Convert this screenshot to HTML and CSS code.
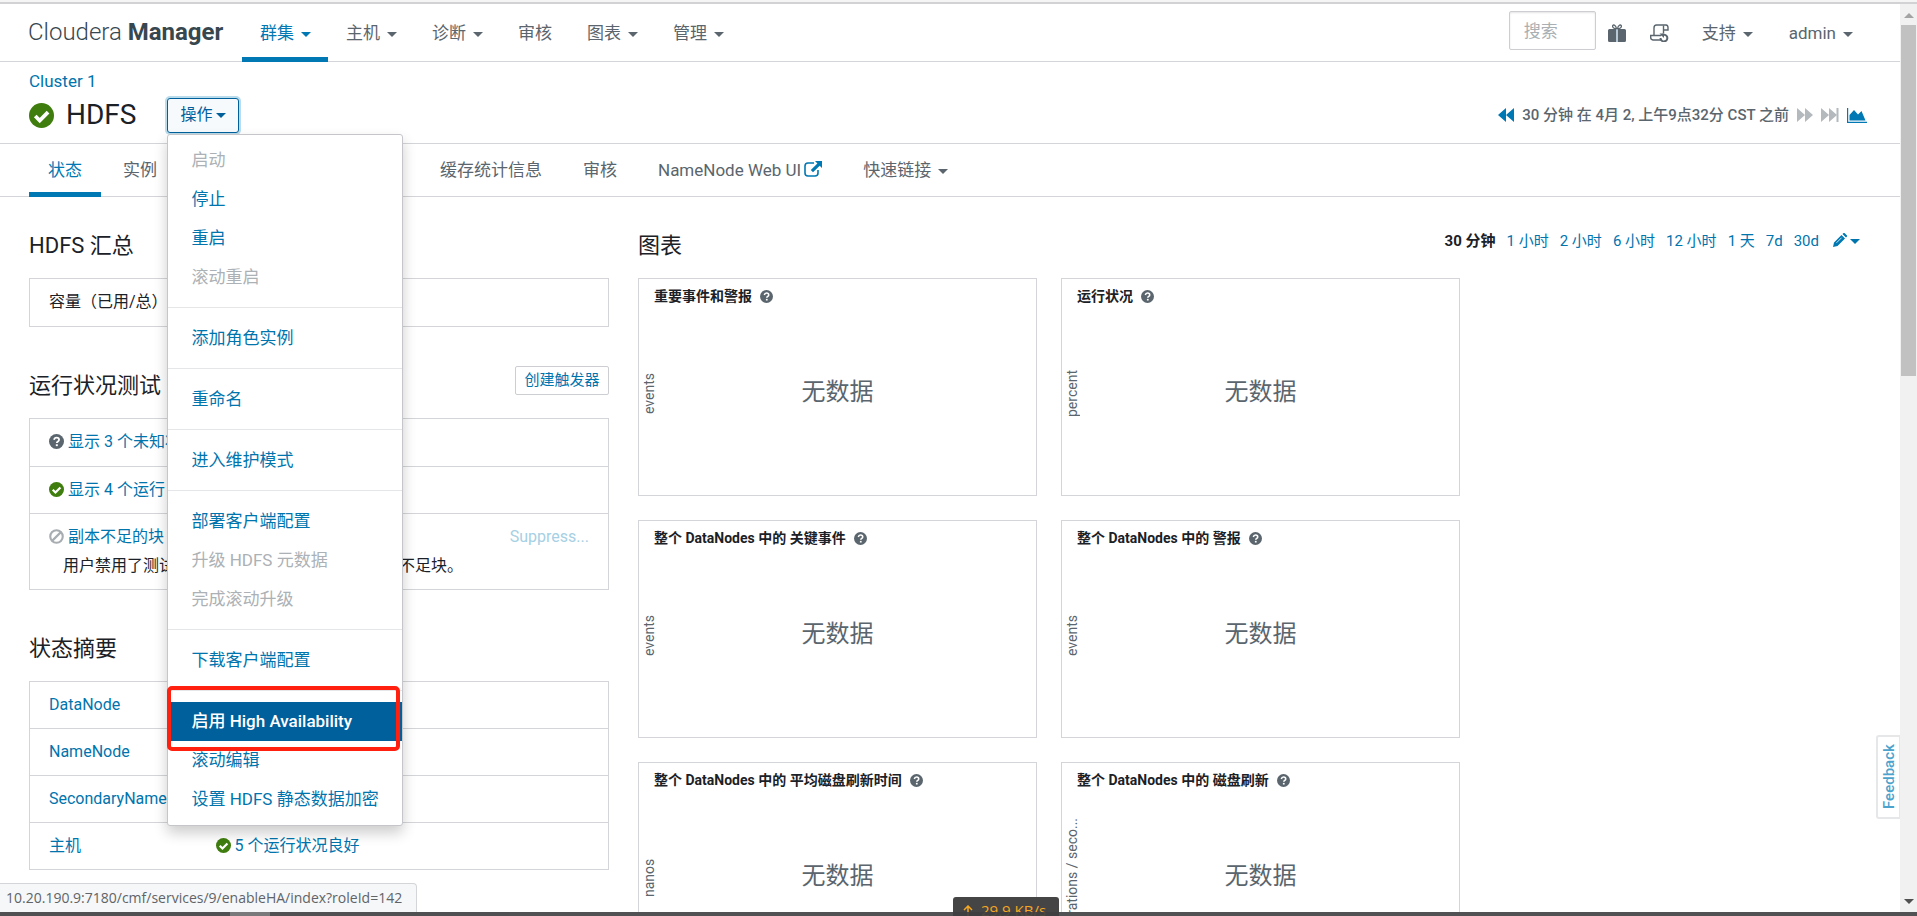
FILE: index.html
```html
<!DOCTYPE html>
<html lang="zh-CN">
<head>
<meta charset="utf-8">
<title>HDFS - Cloudera Manager</title>
<link rel="stylesheet" href="styles.css">
</head>
<body>
<svg class="defs" aria-hidden="true">
  <symbol id="check" viewBox="0 0 24 24"><circle cx="12" cy="12" r="12" fill="#3f7d0e"/><path d="M6 12.5l4.3 4.3 8-8" fill="none" stroke="#fff" stroke-width="3.6"/></symbol>
  <symbol id="question" viewBox="0 0 24 24"><circle cx="12" cy="12" r="12" fill="#5a656d"/><path d="M8 9.2c.5-2.300 2-3.500 4.100-3.500 2.400 0 4 1.400 4 3.300 0 3-3.600 2.800-3.600 5.500" fill="none" stroke="#fff" stroke-width="2.900"/><rect x="10.900" y="16.400" width="3.200" height="3" fill="#fff"/></symbol>
  <symbol id="ban" viewBox="0 0 24 24"><circle cx="12" cy="12" r="10" fill="none" stroke="#a8adb1" stroke-width="3.400"/><path d="M5 19L19 5" stroke="#a8adb1" stroke-width="3.400"/></symbol>
</svg>
<div class="viewport">
  <div class="page">
    <header class="topbar">
      <a class="brand" href="#">Cloudera <b>Manager</b></a>
      <nav class="mainnav">
        <a class="active" href="#">群集<i class="caret"></i></a>
        <a href="#">主机<i class="caret"></i></a>
        <a href="#">诊断<i class="caret"></i></a>
        <a href="#">审核</a>
        <a href="#">图表<i class="caret"></i></a>
        <a href="#">管理<i class="caret"></i></a>
      </nav>
      <div class="tools">
        <input class="search" type="text" placeholder="搜索" aria-label="搜索">
        <a class="tool-icon" href="#" aria-label="新增功能"><svg width="18" height="18" viewBox="0 0 18 18"><path d="M0 6.500Q0 5 1.500 5H8v13H1.500Q0 18 0 16.500zM10 5h6.500Q18 5 18 6.500v10q0 1.500-1.500 1.500H10z" fill="#5a656d"/><rect x="8" y="5" width="2" height="13" fill="#b9c8d6"/><path d="M8.500 5C5.500 4.500 4.300 3.300 4.600 2 5 .4 7.600.2 8.600 5M9.500 5c3-.5 4.200-1.700 3.900-3C13 .4 10.400.2 9.400 5" fill="none" stroke="#5a656d" stroke-width="1.300"/></svg></a>
        <a class="tool-icon" href="#" aria-label="运行中的命令"><svg width="19" height="18" viewBox="0 0 19 18"><g fill="none" stroke="#5a656d" stroke-width="1.400"><path d="M4 11.500V4Q4 1 6.500 1H16q2 .3 2 2.500V6h-4"/><path d="M13.500 1.500V9"/><path d="M11 16H3q-2.300-.3-2.300-2.500v-2H11"/><path d="M10.500 14a3.400 3.400 0 1 0 1-2.400" stroke-width="2"/></g><path d="M9.500 9.500h4.500v4.500z" fill="#5a656d"/></svg></a>
        <a class="support" href="#">支持<i class="caret"></i></a>
        <a class="user" href="#">admin<i class="caret"></i></a>
      </div>
    </header>

    <section class="titlebar">
      <a class="crumb" href="#">Cluster 1</a>
      <div class="titlerow">
        <svg class="status-big"><use href="#check"/></svg>
        <h1>HDFS</h1>
        <div class="actions">
          <button class="actions-btn" type="button">操作<i class="caret"></i></button>
          <ul class="menu">
            <li><a class="off" href="#">启动</a></li>
            <li><a href="#">停止</a></li>
            <li><a href="#">重启</a></li>
            <li><a class="off" href="#">滚动重启</a></li>
            <li class="sep"></li>
            <li><a href="#">添加角色实例</a></li>
            <li class="sep"></li>
            <li><a href="#">重命名</a></li>
            <li class="sep"></li>
            <li><a href="#">进入维护模式</a></li>
            <li class="sep"></li>
            <li><a href="#">部署客户端配置</a></li>
            <li><a class="off" href="#">升级 HDFS 元数据</a></li>
            <li><a class="off" href="#">完成滚动升级</a></li>
            <li class="sep"></li>
            <li><a href="#">下载客户端配置</a></li>
            <li class="sep"></li>
            <li><a class="hover" href="#">启用 High Availability</a></li>
            <li><a href="#">滚动编辑</a></li>
            <li><a href="#">设置 HDFS 静态数据加密</a></li>
          </ul>
        </div>
        <div class="timebar">
          <svg width="16" height="14" viewBox="0 0 16 14"><path d="M8 0v14L0 7zM16 0v14L8 7z" fill="#0078b3"/></svg>
          <span>30 分钟 在 4月 2, 上午9点32分 CST 之前</span>
          <svg width="16" height="14" viewBox="0 0 16 14"><path d="M0 0v14l8-7zM8 0v14l8-7z" fill="#b3b9bd"/></svg>
          <svg width="18" height="14" viewBox="0 0 18 14"><path d="M0 0v14l8-7zM8 0v14l8-7zM15.500 0h2v14h-2z" fill="#b3b9bd"/></svg>
          <svg width="20" height="15" viewBox="0 0 20 15"><path d="M0 0h1.200v13.800H20V15H0z" fill="#0078b3"/><path d="M2.500 12.500V7L7 2l4 4.500L14.500 3 18.500 12.500z" fill="#0078b3"/></svg>
        </div>
      </div>
    </section>

    <nav class="tabs">
      <a class="active" href="#">状态</a>
      <a href="#">实例</a>
      <a href="#">配置</a>
      <a href="#">命令</a>
      <a href="#">图表库</a>
      <a href="#">缓存统计信息</a>
      <a href="#">审核</a>
      <a href="#">NameNode Web UI<svg width="18" height="16" viewBox="0 0 18 16"><path d="M10 2H4Q1 2 1 5v7q0 3 3 3h7q3 0 3-3V9" fill="none" stroke="#0078b3" stroke-width="1.600"/><path d="M11 0h7v7l-2.300-2.300L9 11.300 6.800 9.100l6.600-6.700z" fill="#0078b3"/></svg></a>
      <a href="#">快速链接<i class="caret"></i></a>
    </nav>

    <main class="content">
      <div class="left">
        <section class="block">
          <div class="head"><h2>HDFS 汇总</h2></div>
          <ul class="panel"><li>容量（已用/总）</li></ul>
        </section>
        <section class="block">
          <div class="head"><h2>运行状况测试</h2><button class="small-btn" type="button">创建触发器</button></div>
          <ul class="panel">
            <li><a href="#"><svg class="ico"><use href="#question"/></svg>显示 3 个未知状况</a></li>
            <li><a href="#"><svg class="ico"><use href="#check"/></svg>显示 4 个运行良好</a></li>
            <li class="tall">
              <div class="line"><a href="#"><svg class="ico"><use href="#ban"/></svg>副本不足的块</a><a class="suppress" href="#">Suppress...</a></div>
              <p>用户禁用了测试：检查群集是否包含过多的副本不足块。</p>
            </li>
          </ul>
        </section>
        <section class="block">
          <div class="head"><h2>状态摘要</h2></div>
          <table class="summary">
            <tr><td><a href="#">DataNode</a></td><td></td></tr>
            <tr><td><a href="#">NameNode</a></td><td></td></tr>
            <tr><td><a href="#">SecondaryNameNode</a></td><td></td></tr>
            <tr><td><a href="#">主机</a></td><td><a href="#"><svg class="ico"><use href="#check"/></svg>5 个运行状况良好</a></td></tr>
          </table>
        </section>
      </div>
      <div class="right">
        <div class="head chart-head">
          <h2>图表</h2>
          <div class="ranges">
            <b>30 分钟</b><a href="#">1 小时</a><a href="#">2 小时</a><a href="#">6 小时</a><a href="#">12 小时</a><a href="#">1 天</a><a href="#">7d</a><a href="#">30d</a>
            <a class="edit" href="#" aria-label="编辑"><svg width="14" height="14" viewBox="0 0 14 14"><path d="M0 14l1-4.500L8.500 2l3.500 3.500L4.500 13zM9.500 1l1-1h1L14 2.500v1l-1 1z" fill="#0078b3"/><path d="M3.500 9.800L8.600 4.700" stroke="#fff" stroke-width=".8"/></svg><i class="caret"></i></a>
          </div>
        </div>
        <div class="charts">
          <article class="card"><h3>重要事件和警报<svg><use href="#question"/></svg></h3><span class="axis">events</span><p>无数据</p></article>
          <article class="card"><h3>运行状况<svg><use href="#question"/></svg></h3><span class="axis">percent</span><p>无数据</p></article>
          <article class="card"><h3>整个 DataNodes 中的 关键事件<svg><use href="#question"/></svg></h3><span class="axis">events</span><p>无数据</p></article>
          <article class="card"><h3>整个 DataNodes 中的 警报<svg><use href="#question"/></svg></h3><span class="axis">events</span><p>无数据</p></article>
          <article class="card"><h3>整个 DataNodes 中的 平均磁盘刷新时间<svg><use href="#question"/></svg></h3><span class="axis">nanos</span><p>无数据</p></article>
          <article class="card"><h3>整个 DataNodes 中的 磁盘刷新<svg><use href="#question"/></svg></h3><span class="axis">operations / seco...</span><p>无数据</p></article>
        </div>
      </div>
    </main>
    <button class="feedback" type="button">Feedback</button>
    <div class="link-status">10.20.190.9:7180/cmf/services/9/enableHA/index?roleId=142</div>
  </div>
  <div class="scrollbar"><i class="up"></i><i class="thumb"></i><i class="down"></i></div>
</div>
<div class="speed"><svg width="10" height="14" viewBox="0 0 10 14"><path d="M5 14V1M1 5l4-4 4 4" fill="none" stroke="#f5a623" stroke-width="1.500"/></svg>29.9 KB/s</div>
<div class="taskbar"><i></i></div>
</body>
</html>
```
FILE: styles.css
```css
* { box-sizing: border-box; }
body {
  margin: 0;
  height: 100vh;
  display: flex;
  flex-direction: column;
  overflow: hidden;
  position: relative;
  background: #fff;
  color: #1b2126;
  font: 16px/24px Roboto, "Noto Sans CJK SC", sans-serif;
}
a { color: #0074ad; text-decoration: none; }
ul { list-style: none; margin: 0; padding: 0; }
h1, h2, h3, p { margin: 0; font-weight: 400; }
button, input { font: inherit; }
.defs { position: absolute; width: 0; height: 0; }
.caret {
  display: inline-block;
  border: 5px solid transparent;
  border-top-color: currentColor;
  border-bottom: 0;
  margin-left: 7px;
  vertical-align: 2px;
}

.viewport { flex: 1; min-height: 0; display: flex; border-top: 2px solid #f5f5f5; }
.page { flex: 1; min-width: 0; position: relative; overflow: hidden; border-top: 2px solid #d2d2d4; }

.topbar { display: flex; height: 58px; padding: 0 47px 0 28px; border-bottom: 1px solid #d4d5d8; }
.brand { width: 214px; font-size: 24px; line-height: 56px; color: #37474f; font-weight: 300; white-space: nowrap; }
.brand b { font-weight: 700; }
.mainnav { display: flex; font-size: 17px; }
.mainnav a { padding: 0 17px 0 18px; line-height: 58px; height: 58px; color: #5a656d; }
.mainnav a.active { color: #0078b3; border-bottom: 5px solid #0078b3; }
.tools { margin-left: auto; display: flex; align-items: center; font-size: 17px; }
.tools a { color: #5a656d; }
.search { width: 87px; height: 39px; margin: 0 12px 4px 0; padding: 0 14px; border: 1px solid #ccced1; border-radius: 2px; }
.search { font-size: 17px; background: #fff; box-shadow: inset 0 1px 2px #e4e4e4; }
.search::placeholder { color: #a9afb3; }
.tool-icon { display: flex; margin-right: 24px; }
.support { margin: 0 36px 0 9px; }

.titlebar { height: 82px; padding: 8px 34px 0 29px; border-bottom: 1px solid #d4d5d8; }
.crumb { display: block; font-size: 17px; line-height: 22px; }
.titlerow { display: flex; align-items: center; height: 46px; }
.status-big { width: 25px; height: 25px; }
h1 { font-size: 28px; line-height: 36px; margin: 0 31px 0 12px; }
.actions { position: relative; }
.actions-btn {
  width: 72px; height: 35px; padding: 0; color: #00609c; background: #f7fafd;
  border: 1px solid #00609c; border-radius: 3px; box-shadow: 0 0 0 2px #bbdcea;
}
.actions-btn .caret { margin-left: 4px; }
.menu {
  position: absolute; z-index: 5; top: 36px; left: 0; width: 236px; padding: 6px 0;
  background: #fff; border: 1px solid #c4c6c9; border-radius: 3px; box-shadow: 0 7px 14px rgba(0,0,0,.2);
}
.menu a { display: block; position: relative; padding: 0 23px; font-size: 17px; line-height: 39px; white-space: nowrap; }
.menu a.off { color: #acb1b5; }
.menu a.hover { color: #fff; background: #00609c; font-weight: 500; }
.menu a.hover::after { content: ""; position: absolute; inset: -16px 2px -10px -1px; border: 4px solid #ff2010; border-radius: 5px; }
.sep { height: 1px; margin: 10px 0 11px; background: #e5e6e8; }
.timebar { margin-left: auto; margin-right: -1px; display: flex; align-items: center; gap: 8px; color: #5a656d; font-weight: 500; font-size: 15px; }

.tabs { display: flex; gap: 3px; height: 53px; padding-left: 29px; border-bottom: 1px solid #d4d5d8; font-size: 17px; }
.tabs a { height: 53px; padding: 0 19px; line-height: 52px; color: #5a656d; white-space: nowrap; }
.tabs a.active { color: #0078b3; border-bottom: 5px solid #0078b3; }
.tabs svg { margin-left: 3px; vertical-align: -1px; }

.content { display: grid; grid-template-columns: 580px 1fr; gap: 29px; padding: 29px 40px 0 29px; }
.head { display: flex; align-items: center; justify-content: space-between; height: 40px; margin-bottom: 12px; }
h2 { font-size: 22px; line-height: 40px; }
.block { margin-bottom: 39px; }
.small-btn { width: 94px; height: 29px; padding: 0; margin-top: -12px; font-size: 15px; line-height: 20px; color: #0074ad; background: #fff; border: 1px solid #ccced1; border-radius: 2px; }
.panel { border: 1px solid #d4d5d8; }
.panel li { height: 47px; padding: 0 19px; line-height: 46px; border-top: 1px solid #d4d5d8; }
.panel li:first-child { border-top: 0; }
.panel .tall { height: 76px; padding-top: 8px; line-height: 29px; }
.line { display: flex; justify-content: space-between; }
.line .suppress { color: #a6d0e4; }
.tall p { padding-left: 14px; white-space: nowrap; }
.ico { width: 15px; height: 15px; margin-right: 4px; vertical-align: -2px; }
.summary { width: 100%; border-collapse: collapse; table-layout: fixed; border: 1px solid #d4d5d8; }
.summary td { height: 47px; padding: 0 0 0 19px; border-top: 1px solid #d4d5d8; white-space: nowrap; }
.summary td:first-child { width: 167px; }

.chart-head { align-items: flex-start; }
.ranges { display: flex; gap: 11px; line-height: 30px; font-size: 15px; }
.ranges b { font-weight: 700; }
.edit { margin-left: 3px; }
.edit svg { vertical-align: -1px; }
.edit .caret { margin-left: 3px; }
.charts { display: grid; grid-template-columns: repeat(auto-fill, 399px); gap: 24px; }
.card { position: relative; height: 218px; border: 1px solid #d4d5d8; display: grid; place-items: center; }
.card h3 { position: absolute; top: 6px; left: 15px; font-size: 14px; line-height: 22px; font-weight: 700; }
.card h3 svg { width: 13px; height: 13px; margin-left: 8px; vertical-align: -2px; }
.card p { padding-top: 10px; font-size: 24px; line-height: 32px; color: #5a656d; }
.axis { position: absolute; left: 1px; top: 14px; bottom: 0; writing-mode: vertical-rl; transform: rotate(180deg); text-align: center; font-size: 14px; line-height: 18px; color: #5a656d; }

.feedback {
  position: absolute; right: -1px; top: 731px; height: 84px; width: 25px; padding: 0;
  writing-mode: vertical-rl; transform: rotate(180deg); background: #fff; color: #4ba3cd;
  border: 2px solid #e6e7e9; border-radius: 0 3px 3px 0; font-weight: 500; font-size: 15px; line-height: 20px;
}
.link-status {
  position: absolute; left: 0; bottom: 0; height: 29px; padding: 0 14px 0 6px; line-height: 28px; font-size: 14px;
  font-family: "Open Sans", sans-serif; color: #606468; background: #f6f7f8; border: 1px solid #d4d5d8; border-width: 1px 1px 0 0; border-radius: 0 4px 0 0;
}
.scrollbar { width: 17px; background: #f1f1f1; border-top: 2px solid #d2d2d4; display: flex; flex-direction: column; align-items: center; }
.up { border: 5px solid transparent; border-top: 0; border-bottom-color: #a3a3a3; margin: 9px 0 7px; }
.thumb { width: 15px; height: 351px; background: #c1c1c1; }
.down { margin: auto 0 8px; border: 5px solid transparent; border-bottom: 0; border-top-color: #505050; }
.speed {
  position: absolute; left: 953px; bottom: 0; width: 106px; height: 19px; padding: 5px 0 0 10px; overflow: hidden;
  display: flex; align-items: flex-start; gap: 8px; font: 15px/16px "Open Sans", sans-serif; color: #f5a623; background: #454545; border-radius: 3px 3px 0 0;
}
.speed svg { flex: none; margin-top: 3px; }
.taskbar { height: 4px; background: #3e3e40; position: relative; flex: none; opacity: .9; }
.taskbar i { display: block; width: 40px; height: 4px; margin-left: 230px; background: #6b6b6d; }
```
